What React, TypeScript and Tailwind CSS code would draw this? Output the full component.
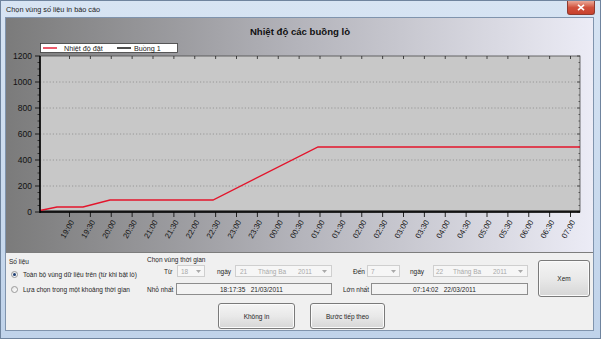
import React from "react";

const times = [
  "19:00", "19:30", "20:00", "20:30", "21:00", "21:30", "22:00", "22:30", "23:00", "23:30",
  "00:00", "00:30", "01:00", "01:30", "02:00", "02:30", "03:00", "03:30", "04:00", "04:30",
  "05:00", "05:30", "06:00", "06:30", "07:00",
];

const X0 = 69.5;
const STEP = 20.875;
const PLOT = { left: 40, right: 580, top: 56, bottom: 212 };
const yOf = (v: number) => PLOT.bottom - v * 0.13;

const setPoint = "40,210.5 57,207 83,207 110,200 213,200 318,147 580,147";

function Chart() {
  const majors = [0, 200, 400, 600, 800, 1000, 1200];
  const minors: number[] = [];
  for (let v = 0; v <= 1200; v += 50) if (v % 200 !== 0) minors.push(v);

  return (
    <svg width={587} height={234} viewBox="6 18 587 234" className="block">
      <text x={300} y={34.5} textAnchor="middle" fontSize={9.6} fontWeight={700} fill="#111" fontFamily="Liberation Sans, Arial, sans-serif">
        Nhiệt độ các buồng lò
      </text>

      {/* legend */}
      <rect x={40.5} y={43.5} width={137} height={9} fill="#fff" stroke="#3a3a3a" strokeWidth={0.8} />
      <line x1={43} x2={57} y1={48} y2={48} stroke="#e3142b" strokeWidth={1.4} />
      <text x={64} y={50.6} fontSize={7.2} fill="#222" fontFamily="Liberation Sans, Arial, sans-serif">Nhiệt độ đặt</text>
      <line x1={117} x2={131} y1={48} y2={48} stroke="#000" strokeWidth={1.4} />
      <text x={134} y={50.6} fontSize={7.2} fill="#222" fontFamily="Liberation Sans, Arial, sans-serif">Buồng 1</text>

      {/* plot area */}
      <rect x={PLOT.left} y={PLOT.top} width={PLOT.right - PLOT.left} height={PLOT.bottom - PLOT.top} fill="#c8c8c8" stroke="#4a4a4a" strokeWidth={0.8} />
      {[200, 400, 600, 800, 1000].map((v) => (
        <line key={v} x1={PLOT.left} x2={PLOT.right} y1={yOf(v)} y2={yOf(v)} stroke="#8c8c8c" strokeWidth={0.8} strokeDasharray="1.2 2" />
      ))}

      {/* y ticks */}
      {majors.map((v) => (
        <g key={v}>
          <line x1={35} x2={40} y1={yOf(v)} y2={yOf(v)} stroke="#111" strokeWidth={0.9} />
          <line x1={577} x2={580} y1={yOf(v)} y2={yOf(v)} stroke="#333" strokeWidth={0.8} />
          <text x={32} y={yOf(v) + 3} textAnchor="end" fontSize={8.5} fill="#111" fontFamily="Liberation Sans, Arial, sans-serif">
            {v}
          </text>
        </g>
      ))}
      {minors.map((v) => (
        <g key={v}>
          <line x1={37.5} x2={40} y1={yOf(v)} y2={yOf(v)} stroke="#111" strokeWidth={0.7} />
          <line x1={578.5} x2={580} y1={yOf(v)} y2={yOf(v)} stroke="#333" strokeWidth={0.7} />
        </g>
      ))}

      {/* x ticks and labels */}
      {times.map((t, i) => {
        const x = X0 + i * STEP;
        return (
          <g key={t}>
            <line x1={x} x2={x} y1={PLOT.top} y2={PLOT.top + 3} stroke="#222" strokeWidth={0.8} />
            <line x1={x} x2={x} y1={PLOT.bottom} y2={PLOT.bottom + 5} stroke="#111" strokeWidth={0.9} />
            <text
              x={x + 5}
              y={222}
              textAnchor="end"
              fontSize={7.8}
              fill="#111"
              fontFamily="Liberation Sans, Arial, sans-serif"
              transform={`rotate(-60 ${x + 5} 222)`}
            >
              {t}
            </text>
          </g>
        );
      })}

      {/* data */}
      <line x1={PLOT.left} x2={PLOT.right} y1={211} y2={211} stroke="#000" strokeWidth={1} />
      <polyline points={setPoint} fill="none" stroke="#e3142b" strokeWidth={1.3} />

      {/* axes */}
      <line x1={PLOT.left} x2={PLOT.left} y1={PLOT.top} y2={PLOT.bottom + 1} stroke="#000" strokeWidth={1.6} />
      <line x1={PLOT.left} x2={PLOT.right} y1={PLOT.bottom} y2={PLOT.bottom} stroke="#000" strokeWidth={1.6} />
    </svg>
  );
}

function Arrow() {
  return (
    <svg width={5} height={3} viewBox="0 0 5 3" className="shrink-0">
      <path d="M0 0 L5 0 L2.5 3 Z" fill="#a9a9a9" />
    </svg>
  );
}

function Radio({ checked }: { checked?: boolean }) {
  return (
    <span className="flex h-[7px] w-[7px] shrink-0 items-center justify-center rounded-full border border-[#9a9a9a] bg-linear-to-br from-[#e4e4e4] to-[#ffffff]">
      {checked ? <span className="h-[3px] w-[3px] rounded-full bg-[#1f3f73]" /> : null}
    </span>
  );
}

function Button({ label, className }: { label: string; className: string }) {
  return (
    <div
      className={`flex items-center justify-center rounded-[3px] border border-[#7a7a7a] bg-linear-to-b from-[#f4f4f4] via-[#e9e9e9] to-[#d6d6d6] text-[6.5px] text-[#1e1e1e] shadow-[inset_0_0_0_1px_#fbfbfb] ${className}`}
    >
      {label}
    </div>
  );
}

export default function App() {
  return (
    <div className="flex h-[339px] w-[601px] flex-col overflow-hidden border border-[#6f849e] bg-linear-to-b from-[#d7e4f3] to-[#c0d3ea] font-['Liberation_Sans',Arial,sans-serif]">
      {/* title bar */}
      <div className="flex h-[16px] shrink-0 items-start">
        <span className="ml-[5px] mt-[4px] text-[7.3px] leading-[9px] text-[#1b1b1b]">Chọn vùng số liệu in báo cáo</span>
        <div className="ml-auto mr-[5px] flex h-[14px] w-[28px] items-center justify-center rounded-b-[3px] border border-t-0 border-[#8e3a2f] bg-linear-to-b from-[#e9a898] via-[#d0513d] to-[#c8412c]">
          <svg width={8} height={7} viewBox="0 0 8 7">
            <path d="M1 0.8 L7 6.2 M7 0.8 L1 6.2" stroke="#fff" strokeWidth={1.6} />
          </svg>
        </div>
      </div>

      {/* body */}
      <div className="ml-[4px] flex w-[589px] flex-col border border-[#8094ad] bg-[#f0f0f0]">
        <div className="h-[235px] border-b border-[#7d7d7d] bg-linear-to-r from-[#7b7b7b] via-[#b4b4bb] to-[#ececf6]">
          <Chart />
        </div>

        <div className="flex h-[77px] text-[6.5px] leading-[9px] text-[#1e1e1e]">
          {/* Số liệu */}
          <div className="flex w-[141px] shrink-0 flex-col">
            <div className="ml-[3px] mt-[4px] h-[9px]">Số liệu</div>
            <div className="ml-[5px] mt-[4px] flex h-[9px] items-center gap-[5px]">
              <Radio checked />
              <span>Toàn bộ vùng dữ liệu trên (từ khi bật lò)</span>
            </div>
            <div className="ml-[5px] mt-[6px] flex h-[9px] items-center gap-[5px]">
              <Radio />
              <span>Lựa chọn trong một khoảng thời gian</span>
            </div>
          </div>

          {/* Chọn vùng thời gian */}
          <div className="flex w-[381px] shrink-0 flex-col">
            <div className="mt-[2px] h-[9px]">Chọn vùng thời gian</div>
            <div className="mt-[1px] flex h-[12px] items-center">
              <span className="ml-[17px] w-[13px]">Từ</span>
              <div className="flex h-[12px] w-[28px] items-center justify-between border border-[#cfcfcf] bg-[#f6f6f6] px-[3px] text-[#a9a9a9]">
                <span>18</span>
                <Arrow />
              </div>
              <span className="ml-[12px] w-[18px]">ngày</span>
              <div className="flex h-[12px] w-[97px] items-center border border-[#cfcfcf] bg-[#f6f6f6] pl-[4px] pr-[4px] text-[#a9a9a9]">
                <span className="w-[18px]">21</span>
                <span className="w-[40px]">Tháng Ba</span>
                <span>2011</span>
                <span className="ml-auto"><Arrow /></span>
              </div>
              <span className="ml-[21px] w-[14px]">Đến</span>
              <div className="flex h-[12px] w-[33px] items-center justify-between border border-[#cfcfcf] bg-[#f6f6f6] px-[3px] text-[#a9a9a9]">
                <span>7</span>
                <Arrow />
              </div>
              <span className="ml-[10px] w-[23px]">ngày</span>
              <div className="flex h-[12px] w-[95px] items-center border border-[#cfcfcf] bg-[#f6f6f6] pl-[2px] pr-[4px] text-[#a9a9a9]">
                <span className="w-[17px]">22</span>
                <span className="w-[40px]">Tháng Ba</span>
                <span>2011</span>
                <span className="ml-auto"><Arrow /></span>
              </div>
            </div>
            <div className="mt-[6px] flex h-[12px] items-center">
              <span className="w-[29px]">Nhỏ nhất</span>
              <div className="flex h-[12px] w-[156px] items-center border border-[#8d8d8d] bg-[#f3f3f3] pl-[43px]">
                18:17:35&nbsp;&nbsp;&nbsp;21/03/2011
              </div>
              <span className="ml-[11px] w-[28px]">Lớn nhất</span>
              <div className="flex h-[12px] w-[157px] items-center border border-[#8d8d8d] bg-[#f3f3f3] pl-[41px]">
                07:14:02&nbsp;&nbsp;&nbsp;22/03/2011
              </div>
            </div>
            <div className="mt-[8px] flex">
              <Button label="Không in" className="ml-[71px] h-[26px] w-[77px]" />
              <Button label="Bước tiếp theo" className="ml-[15px] h-[26px] w-[75px]" />
            </div>
          </div>

          {/* Xem */}
          <div className="ml-[10px] mt-[7px]">
            <Button label="Xem" className="h-[37px] w-[52px]" />
          </div>
        </div>
      </div>
    </div>
  );
}
